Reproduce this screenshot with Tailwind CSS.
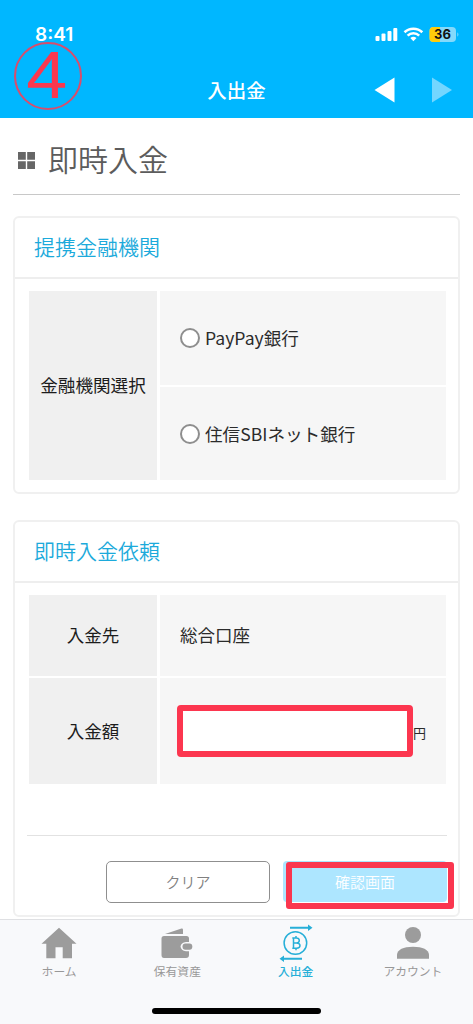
<!DOCTYPE html>
<html lang="ja">
<head>
<meta charset="utf-8">
<meta name="viewport" content="width=device-width, initial-scale=1">
<title>入出金</title>
<script src="https://cdn.jsdelivr.net/npm/@tailwindcss/browser@4"></script>
</head>
<body class="bg-white">
<div class="relative flex h-[1024px] w-[473px] flex-col overflow-hidden bg-white font-['Noto_Sans_CJK_JP',sans-serif] text-[#2b2b2b]">

  <!-- Header -->
  <header class="relative h-[118px] shrink-0 bg-[#00b7ff] text-white">
    <div class="flex h-[62px] items-end justify-between pr-[14px] pl-[35px]">
      <span class="mb-[17px] font-['Inter',sans-serif] text-[19px] leading-5 font-semibold">8:41</span>
      <svg class="mb-5" width="84" height="16" viewBox="0 0 84 16">
        <g fill="#fff">
          <rect x="0.5" y="10" width="4" height="5" rx="1"/>
          <rect x="6.5" y="7.5" width="4" height="7.5" rx="1"/>
          <rect x="12.5" y="5" width="4" height="10" rx="1"/>
          <rect x="18.300" y="2" width="4" height="13" rx="1"/>
        </g>
        <g fill="none" stroke="#fff" stroke-width="2.600">
          <path d="M29.500 6.300A13 13 0 0 1 47.300 6.300"/>
          <path d="M32.600 9.600A8.400 8.400 0 0 1 44.200 9.600"/>
        </g>
        <path d="M38.400 15.200l-3.100-3.100a4.600 4.600 0 0 1 6.200 0z" fill="#fff"/>
        <clipPath id="battery"><rect x="54.500" y="1" width="26.500" height="15" rx="4"/></clipPath>
        <g clip-path="url(#battery)">
          <rect x="54" y="0" width="28" height="16" fill="#84d9fb"/>
          <rect x="54" y="0" width="11" height="16" fill="#ffcc0a"/>
        </g>
        <path d="M82.300 6.300c1.500.7 1.500 3.700 0 4.400z" fill="#84d9fb"/>
        <text x="67.500" y="13.100" text-anchor="middle" font-family="Inter, sans-serif" font-size="13" font-weight="700" fill="#111">36</text>
      </svg>
    </div>
    <div class="grid h-[56px] grid-cols-[1fr_100px_1fr] items-center">
      <span></span>
      <h1 class="text-center text-[19.500px] leading-[56px] font-medium">入出金</h1>
      <div class="flex items-center justify-end gap-[37px] pr-[20px]">
        <svg width="21" height="26" viewBox="0 0 21 26"><path d="M0.500 13L20.500 0.500v25z" fill="#fff"/></svg>
        <svg width="21" height="26" viewBox="0 0 21 26"><path d="M20 13L0 0.500v25z" fill="#73d6ff"/></svg>
      </div>
    </div>
    <!-- Step marker -->
    <div class="absolute top-[42px] left-[14px] flex h-[68px] w-[68px] items-center justify-center rounded-full border-2 border-[#d94d6c]">
      <span class="-mt-[2px] -ml-[3px] scale-x-110 font-['Liberation_Sans',sans-serif] text-[67px] leading-[64px] font-normal text-[#fa384f]">4</span>
    </div>
  </header>

  <!-- Content -->
  <main class="flex flex-1 flex-col px-[13px]">
    <div class="flex h-[77px] shrink-0 items-center gap-[13px] border-b border-[#c8c8c8] pl-[5px]">
      <svg class="mt-[8px]" width="17" height="17" viewBox="0 0 17 17" fill="#666"><path d="M0 0h7.800v7.800H0zM9.200 0h7.800v7.800H9.200zM0 9.200h7.800v7.800H0zM9.200 9.200h7.800v7.800H9.200z"/></svg>
      <h2 class="mt-[3px] text-[30px] leading-10 font-[350] text-[#5c5c5c]">即時入金</h2>
    </div>

    <section class="mt-[21px] h-[278px] shrink-0 rounded-[6px] border-2 border-[#f0f0f0]">
      <h3 class="h-[61px] border-b-2 border-[#eee] pl-[19px] text-[21px] leading-[57px] font-[350] text-[#1caadb]">提携金融機関</h3>
      <div class="mt-[12px] mr-[12px] ml-[14px] grid h-[189px] grid-cols-[128px_1fr] grid-rows-[94px_93px] gap-x-[3px] gap-y-[2px] text-[17.600px]">
        <div class="row-span-2 flex items-center justify-center bg-[#f0f0f0] text-[#1c1c1c]">金融機関選択</div>
        <label class="flex items-center gap-[5px] bg-[#f6f6f6] pl-5"><span class="size-5 rounded-full border-2 border-[#8e8e8e] bg-white"></span>PayPay銀行</label>
        <label class="flex items-center gap-[5px] bg-[#f6f6f6] pt-px pl-5"><span class="size-5 rounded-full border-2 border-[#8e8e8e] bg-white"></span>住信SBIネット銀行</label>
      </div>
    </section>

    <section class="mt-[26px] h-[397px] shrink-0 rounded-[6px] border-2 border-[#f0f0f0]">
      <h3 class="h-[61px] border-b-2 border-[#eee] pl-[19px] text-[21px] leading-[57px] font-[350] text-[#1caadb]">即時入金依頼</h3>
      <div class="mt-[12px] mr-[12px] ml-[14px] grid h-[189px] grid-cols-[128px_1fr] grid-rows-[81px_106px] gap-x-[3px] gap-y-[2px] text-[17.500px]">
        <div class="flex items-center justify-center bg-[#f0f0f0] text-[#1c1c1c]">入金先</div>
        <div class="flex items-center bg-[#f6f6f6] pl-5">総合口座</div>
        <div class="flex items-center justify-center bg-[#f0f0f0] text-[#1c1c1c]">入金額</div>
        <div class="flex items-center bg-[#f6f6f6] pl-[17px]">
          <div class="h-[52px] w-[236px] rounded-[4px] border-[6px] border-[#fc364f] bg-white"></div>
          <span class="mt-[3px] text-[13px]">円</span>
        </div>
      </div>
      <div class="mt-[51px] mr-[11px] ml-[12px] border-t border-[#e2e2e2]"></div>
      <div class="mt-[25px] mr-[11px] flex justify-end gap-[13px] text-[15px]">
        <button class="h-[42px] w-[164px] rounded-[5px] border border-[#8f8f8f] leading-[40px] font-[350] text-[#808080]">クリア</button>
        <div class="relative h-[42px] w-[164px]">
          <button class="h-[41px] w-[164px] rounded-[4px] bg-[#ade6ff] leading-[41px] font-[350] text-white">確認画面</button>
          <span class="absolute top-[1px] left-[3px] h-[47px] w-[168px] rounded-[3px] border-[6px] border-[#fa364f]"></span>
        </div>
      </div>
    </section>
  </main>

  <!-- Tab bar -->
  <nav class="relative grid h-[105px] shrink-0 grid-cols-4 border-t border-[#dfe0e3] bg-[#f8f9fb] text-center text-[11.800px] leading-[16px] text-[#989898]">
    <div class="flex flex-col items-center">
      <svg class="-mt-px h-[44px]" width="36" height="44" viewBox="0 0 36 44" fill="#9c9c9c"><path d="M18 8.800L35.500 24.800H31V39.300H21.700V28.300H14.500V39.300H5.300V24.800H0.500z"/></svg>
      <span>ホーム</span>
    </div>
    <div class="flex flex-col items-center">
      <svg class="-mt-px h-[44px]" width="34" height="44" viewBox="0 0 34 44" fill="#9c9c9c">
        <path d="M5 15L21.500 9.500Q23 9.300 23 10.500V15z"/>
        <path d="M4 17H26.500Q29 17 29 19.500V23H26Q21 23.500 20.500 27.500Q21 31.700 26 32.200H29V36Q29 39 26 39H4Q1.500 39 1.500 36V19.500Q1.500 17 4 17z"/>
        <path d="M25.500 24.500H29.500Q32.300 24.500 32.300 27.500Q32.300 30.800 29.500 30.800H25.500Q22.500 30.800 22.500 27.500Q22.500 24.500 25.500 24.500z"/>
      </svg>
      <span>保有資産</span>
    </div>
    <div class="flex flex-col items-center text-[#27afd8]">
      <svg class="-mt-px h-[44px]" width="34" height="44" viewBox="0 0 34 44" fill="none" stroke="#27afd8" stroke-width="1.500">
        <circle cx="16.400" cy="24" r="11.300"/>
        <path d="M11 8.800H30M23 39.700H4" stroke-width="1.900"/>
        <path d="M29 5.500L33.500 8.800L29 12.100zM5 36.400L0.500 39.700L5 43z" fill="#27afd8" stroke="none"/>
        <path d="M13.300 19H17.500Q20.300 19.300 20.300 21.500Q20.300 23.800 17.500 24H14.500M17.500 24Q21 24.200 21 26.500Q21 29 17.500 29.200H13.300M14.500 19V29.200M17 17V19M17 29.200V31.200"/>
      </svg>
      <span class="font-medium">入出金</span>
    </div>
    <div class="flex flex-col items-center pr-[2px]">
      <svg class="-mt-px h-[44px]" width="34" height="44" viewBox="0 0 34 44" fill="#9c9c9c"><circle cx="17" cy="16" r="8"/><path d="M1 39.700V35.500Q2 27.900 17 27.700Q32 27.900 33 35.500V39.700z"/></svg>
      <span>アカウント</span>
    </div>
    <div class="absolute bottom-[10px] left-[152px] h-[6px] w-[169px] rounded-full bg-black"></div>
  </nav>
</div>
</body>
</html>
